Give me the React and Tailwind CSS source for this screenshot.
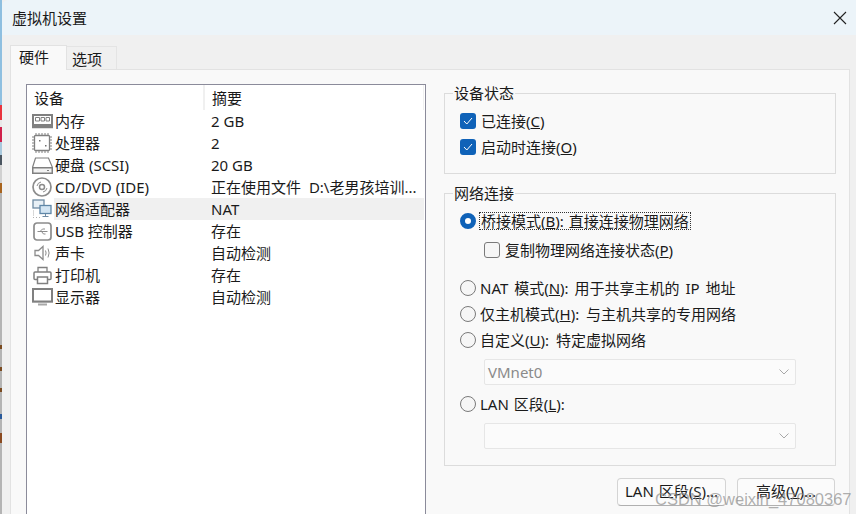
import React from 'react';

const font = { fontFamily: '"Noto Sans", "Noto Sans CJK SC", sans-serif' };

function IconRam() {
    return (
        <svg width="21" height="15" viewBox="0 0 21 15" fill="none" stroke="#808080">
            <rect x="1" y="1" width="19" height="10" strokeWidth="2" />
            <path d="M3.500 3.500h4v3.500h-4zM9 3.500h3.500v3.500H9zM14 3.500h3.500v3.500H14z" strokeWidth="1" />
            <path d="M0 13h21" strokeWidth="2.500" />
        </svg>
    );
}

function IconCpu() {
    return (
        <svg width="22" height="22" viewBox="0 0 22 22" fill="none" stroke="#808080">
            <rect x="3.500" y="3.500" width="15" height="15" rx="1" strokeWidth="1.300" />
            <path d="M5 1v2M8 1v2M11 1v2M14 1v2M17 1v2M5 19v2M8 19v2M11 19v2M14 19v2M17 19v2M1 5h2M1 8h2M1 11h2M1 14h2M1 17h2M19 5h2M19 8h2M19 11h2M19 14h2M19 17h2" />
            <path d="M8 8h1.500v1.500H8zM14 13h1.500v1.500H14z" fill="#707070" stroke="none" />
        </svg>
    );
}

function IconDisk() {
    return (
        <svg width="21" height="17" viewBox="0 0 21 17" fill="none" stroke="#808080">
            <path d="M.5 10.500 3.500 1h13l4 9.500" strokeWidth="1.200" />
            <rect x="0" y="10" width="21" height="7" fill="#808080" stroke="none" />
            <rect x="1.500" y="11.500" width="18" height="4" fill="#f2f2f2" stroke="none" />
            <path d="M15 13.500h2" />
        </svg>
    );
}

function IconCd() {
    return (
        <svg width="20" height="20" viewBox="0 0 20 20" fill="none" stroke="#8c8c8c">
            <circle cx="10" cy="10" r="9" strokeWidth="1.700" />
            <circle cx="10" cy="10" r="2.500" strokeWidth="1.500" />
            <path d="M5 9a5 5 0 0 1 4-4M15 11a5 5 0 0 1-4 4" strokeWidth="1" />
        </svg>
    );
}

function IconNet() {
    return (
        <svg width="20" height="20" viewBox="0 0 20 20" fill="none">
            <rect x="1" y="1" width="11" height="8" fill="#e8f0f6" stroke="#6f8ba3" strokeWidth="1.300" />
            <rect x="8" y="6.500" width="11" height="8" fill="#d3e5f3" stroke="#5f87a8" strokeWidth="1.300" />
            <path d="M13.500 15v2M10.500 17.500h6" stroke="#6f8ba3" />
            <path d="M1 12h1M1 14h1M1 16h1M1 18.500h1M4 18.500h1M7 18.500h1" stroke="#b0b0b0" />
        </svg>
    );
}

function IconUsb() {
    return (
        <svg width="19" height="19" viewBox="0 0 19 19" fill="none" stroke="#8c8c8c">
            <rect x="1" y="1" width="17" height="17" rx="3" strokeWidth="1.700" />
            <path d="M4.500 9.500h10M7 9.500 9.500 7h2.500M8.500 9.500l2 2.500h2" strokeWidth="1" />
        </svg>
    );
}

function IconSound() {
    return (
        <svg width="17" height="16" viewBox="0 0 17 16" fill="none" stroke="#8c8c8c">
            <path d="M1 5.500h3.500L9 1.500v13l-4.500-4H1z" strokeWidth="1.300" />
            <path d="M11.500 5.500q1.200 2.500 0 5M14 3.500q2.200 4.500 0 9" strokeWidth="1" />
        </svg>
    );
}

function IconPrinter() {
    return (
        <svg width="19" height="19" viewBox="0 0 19 19" fill="none" stroke="#808080">
            <path d="M5 6V1.500h9V6" strokeWidth="1.300" />
            <rect x="1" y="6" width="17" height="7.500" rx="1" strokeWidth="1.500" />
            <rect x="4.500" y="11" width="10" height="6.500" fill="#fff" strokeWidth="1.500" />
        </svg>
    );
}

function IconMonitor() {
    return (
        <svg width="21" height="18" viewBox="0 0 21 18" fill="none">
            <rect x="1" y="1" width="19" height="12.500" stroke="#808080" strokeWidth="2" />
            <rect x="0" y="14" width="21" height="1" fill="#a8a8a8" />
            <rect x="6" y="15.500" width="9" height="2" fill="#a8a8a8" />
        </svg>
    );
}

const devices = [
    { name: '内存', value: '2 GB', icon: <IconRam /> },
    { name: '处理器', value: '2', icon: <IconCpu /> },
    { name: '硬盘 (SCSI)', value: '20 GB', icon: <IconDisk /> },
    { name: 'CD/DVD (IDE)', value: '正在使用文件 D:\\老男孩培训...', icon: <IconCd />, wide: true },
    { name: '网络适配器', value: 'NAT', icon: <IconNet />, selected: true },
    { name: 'USB 控制器', value: '存在', icon: <IconUsb /> },
    { name: '声卡', value: '自动检测', icon: <IconSound /> },
    { name: '打印机', value: '存在', icon: <IconPrinter /> },
    { name: '显示器', value: '自动检测', icon: <IconMonitor /> },
];

function Check({ label }) {
    return (
        <div className="flex items-center h-[26px] gap-[5px]">
            <span className="w-4 h-4 rounded-[3px] bg-[#0f62b8] flex items-center justify-center">
                <svg width="10" height="8" viewBox="0 0 10 8" fill="none" stroke="#fff" strokeWidth="1">
                    <path d="M1 4l2.800 3L9 1" />
                </svg>
            </span>
            <span>{label}</span>
        </div>
    );
}

function Radio({ checked, className, children }) {
    return (
        <div className={`flex items-center gap-[4px] ${className}`}>
            {checked ? (
                <span className="w-4 h-4 rounded-full border-[5px] border-[#0f62b8] bg-white" />
            ) : (
                <span className="w-4 h-4 rounded-full border border-[#7a7a7a] bg-[#f6f6f6]" />
            )}
            {children}
        </div>
    );
}

function Combo({ text, className }) {
    return (
        <div className={`ml-[24px] w-[312px] h-[26px] border border-[#e6e6e6] rounded-[2px] bg-[#fbfbfb] flex items-center justify-between pl-[3px] pr-[6px] text-[#8a8a8a] ${className}`}>
            <span>{text}</span>
            <svg width="10" height="6" viewBox="0 0 10 6" fill="none" stroke="#a8a8a8">
                <path d="M.5.500 5 5 9.500.500" />
            </svg>
        </div>
    );
}

export default function App() {
    return (
        <div className="w-[856px] h-[514px] overflow-hidden flex relative text-[15px] leading-[20px] [word-spacing:1px] text-[#1a1a1a] bg-[#f0f0f0]" style={font}>
            <div className="w-[2px] bg-[#b4b4b4] flex flex-col">
                <div className="h-[105px] bg-[#8ebfe0]" />
                <div className="h-[15px] bg-[#e8323c]" />
                <div className="h-[7px] bg-[#e8e8e8]" />
                <div className="h-[15px] bg-[#d0204a]" />
                <div className="h-[13px] bg-[#a8c8dc]" />
                <div className="h-[10px] bg-[#4a5560]" />
                <div className="h-[18px] bg-[#d0d0d0]" />
                <div className="h-[10px] bg-[#a8641e]" />
                <div className="h-[152px] bg-[#b4b4b4]" />
                <div className="h-[4px] bg-[#7a4a20]" />
                <div className="h-[18px] bg-[#b4b4b4]" />
                <div className="h-[4px] bg-[#7a4a20]" />
                <div className="h-[17px] bg-[#b4b4b4]" />
                <div className="h-[4px] bg-[#7a4a20]" />
                <div className="h-[22px] bg-[#b4b4b4]" />
                <div className="h-[5px] bg-[#2a5a9a]" />
                <div className="h-[14px] bg-[#b4b4b4]" />
                <div className="h-[10px] bg-[#8a4a20]" />
            </div>
            <div className="flex-1 flex flex-col min-w-0">
                {/* title bar */}
                <div className="h-[35px] bg-[#ecf4f9] flex items-center justify-between pl-[10px] pr-[9px] rounded-tl-[6px]">
                    <span>虚拟机设置</span>
                    <svg width="14" height="14" viewBox="0 0 14 14" fill="none" stroke="#222" strokeWidth="1.100">
                        <path d="M1 1l12 12M13 1 1 13" />
                    </svg>
                </div>

                {/* tabs */}
                <div className="flex items-end pl-[8px] pt-[9px] h-[34px]">
                    <div className="w-[57px] h-[25px] bg-[#f9f9f9] border border-b-0 border-[#e2e2e2] pl-[8px] pt-[1px] -mb-px relative z-10">硬件</div>
                    <div className="w-[50px] h-[23px] bg-[#f0f0f0] border border-b-0 border-l-0 border-[#e4e4e4] pl-[5px] pt-[2px]">选项</div>
                </div>

                {/* panel */}
                <div className="flex-1 min-h-0 ml-[8px] mr-[6px] bg-[#f9f9f9] border border-b-0 border-[#e2e2e2] flex pl-[15px] pr-[12px]">
                    <div className="w-[400px] mt-[14px] bg-white border border-b-0 border-[#8b8b9a]">
                        <div className="flex h-[25px] items-center">
                            <div className="w-[178px] pl-[7px] h-full border-r-2 border-[#f0f0f0] flex items-center">设备</div>
                            <div className="flex-1 pl-[7px] mr-[1px] h-full border-r border-[#f0f0f0] flex items-center">摘要</div>
                        </div>
                        {devices.map((d) => (
                            <div key={d.name} className="flex h-[22px]">
                                <div className="w-[27px] shrink-0 flex items-center justify-center pl-[3px]">{d.icon}</div>
                                <div className={`flex flex-1 items-center mr-[1px] ${d.selected ? 'bg-[#f0f0f0]' : ''}`}>
                                    <span className="w-[157px] pl-[1px] whitespace-nowrap [word-spacing:0px]">{d.name}</span>
                                    <span className={`whitespace-nowrap ${d.wide ? '[word-spacing:4px]' : '[word-spacing:0px]'}`}>{d.value}</span>
                                </div>
                            </div>
                        ))}
                    </div>

                    <div className="w-[392px] ml-[18px]">
                        <fieldset className="h-[91px] mt-[13px] border border-[#dcdcdc]">
                            <legend className="ml-[8px] px-[1px] h-[20px]">设备状态</legend>
                            <div className="pl-[15px] pt-[5px]">
                                <Check label={<>已连接(<u>C</u>)</>} />
                                <Check label={<>启动时连接(<u>O</u>)</>} />
                            </div>
                        </fieldset>

                        <fieldset className="h-[283px] mt-[9px] border border-[#dcdcdc]">
                            <legend className="ml-[8px] px-[1px] h-[20px]">网络连接</legend>
                            <div className="pl-[15px] pt-[5px]">
                                <Radio checked className="h-[26px]">
                                    <span className="outline-1 outline-dotted outline-[#333] leading-[16px] px-[1px]">桥接模式(<u>B</u>): 直接连接物理网络</span>
                                </Radio>
                                <div className="flex items-center h-[30px] gap-[5px] ml-[24px] mt-[1px]">
                                    <span className="w-4 h-4 rounded-[3px] border border-[#7a7a7a] bg-[#f6f6f6]" />
                                    <span>复制物理网络连接状态(<u>P</u>)</span>
                                </div>
                                <Radio className="h-[26px] mt-[10px] [word-spacing:2px]"><span>NAT 模式(<u>N</u>): 用于共享主机的 IP 地址</span></Radio>
                                <Radio className="h-[26px] [word-spacing:3px]"><span>仅主机模式(<u>H</u>): 与主机共享的专用网络</span></Radio>
                                <Radio className="h-[26px] [word-spacing:3px]"><span>自定义(<u>U</u>): 特定虚拟网络</span></Radio>
                                <Combo text="VMnet0" className="mt-[6px]" />
                                <Radio className="h-[26px] mt-[6px]"><span>LAN 区段(<u>L</u>):</span></Radio>
                                <Combo className="mt-[6px]" />
                            </div>
                        </fieldset>

                        <div className="flex justify-end gap-[11px] mt-[12px] pr-[1px]">
                            <div className="w-[109px] h-[28px] pb-[2px] bg-[#fbfbfb] border border-[#d4d4d4] border-b-[#b0b0b0] rounded-[4px] flex items-center justify-center">LAN 区段(<u>S</u>)...</div>
                            <div className="w-[98px] h-[28px] pb-[2px] bg-[#fbfbfb] border border-[#d4d4d4] border-b-[#b0b0b0] rounded-[4px] flex items-center justify-center">高级(<u>V</u>)...</div>
                        </div>
                    </div>
                </div>
            </div>

            {/* csdn watermark */}
            <div className="absolute left-[655px] top-[489px] text-[16.500px] leading-[20px] text-[#8c8c8c]/70 whitespace-nowrap [word-spacing:0px]" style={{ fontFamily: '"Liberation Sans", sans-serif' }}>CSDN @weixin_47080367</div>
        </div>
    );
}
